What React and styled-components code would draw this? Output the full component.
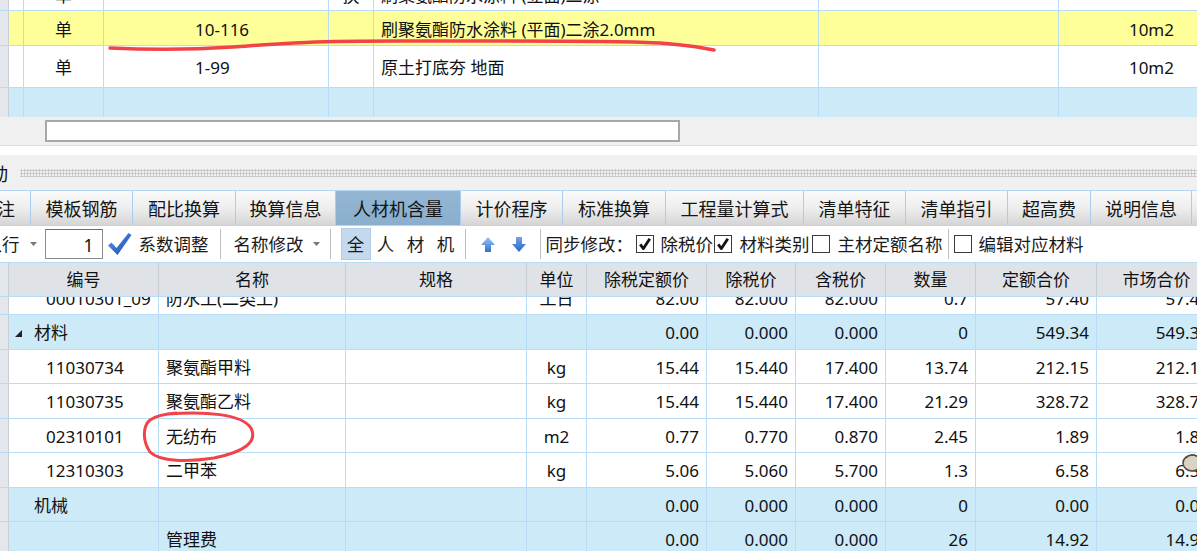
import React from "react";
import styled, { createGlobalStyle } from "styled-components";

const GlobalStyle = createGlobalStyle`
  html, body {
    margin: 0;
    padding: 0;
    background: #f0f0f0;
  }
  body {
    font-family: "Noto Sans", "Noto Sans CJK SC", sans-serif;
  }
`;

const LINE = "#b8dbf6";
const BLUE_ROW = "#cdeaf8";
const TOP_COLS = "9px 15px 80px 225px 45px 445px 240px 160px";
const LOW_COLS = "9px 150px 187px 181px 60px 120px 89px 90px 90px 121px 120px";

const Screen = styled.div`
  position: relative;
  width: 1197px;
  height: 551px;
  overflow: hidden;
  display: flex;
  flex-direction: column;
  background: #f0f0f0;
  color: #111;
`;

const GridPane = styled.div`
  display: flex;
  flex-direction: column;
  overflow: hidden;
  flex: ${p => (p.$fill ? "1" : "none")};
  height: ${p => (p.$h ? `${p.$h}px` : "auto")};
  background: ${p => p.$bg || "#fff"};
`;

const Row = styled.div`
  display: grid;
  grid-template-columns: ${p => p.$cols};
  flex: none;
  height: ${p => p.$h}px;
  margin-top: ${p => (p.$offset ? `-${p.$offset}px` : "0")};
  background: ${p => p.$bg || "#fff"};
  border-bottom: 1px solid ${LINE};
  box-sizing: border-box;
`;

const HeadRow = styled(Row)`
  background: #dfe3e8;
`;

const Cell = styled.div`
  display: flex;
  align-items: center;
  justify-content: ${p =>
    p.$align === "right" ? "flex-end" : p.$align === "left" ? "flex-start" : "center"};
  padding-top: 3px;
  padding-left: ${p => (p.$pl !== undefined ? p.$pl : 7)}px;
  padding-right: ${p => (p.$pr !== undefined ? p.$pr : 7)}px;
  border-right: 1px solid ${LINE};
  box-sizing: border-box;
  min-width: 0;
  overflow: hidden;
  white-space: nowrap;
  font-size: 17px;
  line-height: 20px;
`;

const HeadCell = styled(Cell)`
  padding-top: 1px;
  border-right-color: #c7cdd5;
`;

const GutterCell = styled.div`
  background: #e3e6eb;
  border-right: 1px solid #c9ced6;
`;

const Tri = styled.svg`
  flex: none;
  margin-right: 12px;
`;

const EditBar = styled.div`
  flex: none;
  height: 29px;
  box-sizing: border-box;
  padding: 3px 0 0 45px;
  background: #f0f0f0;
  border-bottom: 1px solid #c8e1f6;
`;

const EditBox = styled.div`
  width: 635px;
  height: 22px;
  box-sizing: border-box;
  background: #fff;
  border: 2px solid #a8a8a8;
`;

const WhiteStrip = styled.div`
  flex: none;
  height: 9px;
  background: #fff;
`;

const GripBar = styled.div`
  flex: none;
  height: 35px;
  display: flex;
  align-items: center;
  background: #f0f0f0;
  font-family: "Noto Sans CJK SC", sans-serif;
  font-size: 18px;
  white-space: nowrap;
`;

const GripLabel = styled.span`
  margin-left: -28px;
  line-height: 20px;
`;

const GripDots = styled.div`
  flex: 1;
  height: 8px;
  margin-left: 12px;
  background-image: radial-gradient(circle, #bdbdbd 0.9px, transparent 1.2px);
  background-size: 3px 3px;
`;

const TabStrip = styled.div`
  flex: none;
  height: 36px;
  box-sizing: border-box;
  display: flex;
  margin-left: -36px;
  border-top: 1px solid #b5d5f2;
  border-bottom: 1px solid #b5d5f2;
  background: #fff;
`;

const Tab = styled.div`
  flex: none;
  width: ${p => p.$w}px;
  box-sizing: border-box;
  display: flex;
  align-items: center;
  justify-content: center;
  border-right: 1px solid #a9cdee;
  background: ${p =>
    p.$active
      ? "linear-gradient(#94b6d3, #8aaecd)"
      : "linear-gradient(#fafafa 0%, #ececec 55%, #d5d5d5 100%)"};
  font-family: "Noto Sans CJK SC", sans-serif;
  font-size: 18px;
  line-height: 20px;
  color: #151515;
  white-space: nowrap;
`;

const Toolbar = styled.div`
  flex: none;
  height: 37px;
  box-sizing: border-box;
  display: flex;
  align-items: center;
  background: #fff;
  border-bottom: 1px solid ${LINE};
  font-family: "Noto Sans CJK SC", sans-serif;
  font-size: 17.5px;
  white-space: nowrap;
`;

const Item = styled.div`
  flex: none;
  display: flex;
  align-items: center;
  margin-left: ${p => p.$ml || 0}px;
  line-height: 20px;
  color: #1a1a1a;
`;

const Sep = styled.div`
  flex: none;
  width: 1px;
  height: 30px;
  margin-left: ${p => p.$ml || 0}px;
  background: #bdbdbd;
`;

const NumBox = styled.div`
  flex: none;
  width: 58px;
  height: 30px;
  margin-left: ${p => p.$ml || 0}px;
  box-sizing: border-box;
  border: 1px solid #8c8c8c;
  border-top-color: #6f6f6f;
  display: flex;
  align-items: flex-end;
  justify-content: flex-end;
  padding: 0 8px 3px 0;
  font-family: "Noto Sans", sans-serif;
  font-size: 17.5px;
  line-height: 20px;
`;

const FilterBtn = styled.div`
  flex: none;
  width: 30px;
  height: 32px;
  box-sizing: border-box;
  display: flex;
  align-items: center;
  justify-content: center;
  background: ${p => (p.$active ? "#c5d9ee" : "transparent")};
  border: 1px solid ${p => (p.$active ? "#b3cce6" : "transparent")};
`;

const Box = styled.div`
  flex: none;
  width: 18px;
  height: 18px;
  margin-left: ${p => p.$ml || 0}px;
  box-sizing: border-box;
  border: 1px solid #3a3a3a;
  background: #fff;
  display: flex;
  align-items: center;
  justify-content: center;
`;

const Overlay = styled.svg`
  position: absolute;
  left: 0;
  top: 0;
  pointer-events: none;
`;

const Caret = ({ ml }) => (
  <Item $ml={ml}>
    <svg width="7" height="4" viewBox="0 0 7 4">
      <path d="M0 0 L7 0 L3.5 4 Z" fill="#777" />
    </svg>
  </Item>
);

const Check = ({ checked, ml }) => (
  <Box $ml={ml}>
    {checked && (
      <svg width="14" height="14" viewBox="0 0 14 14">
        <path d="M2.2 7.4 L5.4 11.6 L11.8 1.8" fill="none" stroke="#111" strokeWidth="2.8" strokeLinejoin="round" />
      </svg>
    )}
  </Box>
);

const Arrow = ({ down, ml }) => (
  <Item $ml={ml}>
    <svg width="14" height="15" viewBox="0 0 14 15">
      <defs>
        <linearGradient id={down ? "ad" : "au"} x1="0" y1="0" x2="0" y2="1">
          <stop offset="0" stopColor={down ? "#6da4ea" : "#9cc8f4"} />
          <stop offset="1" stopColor={down ? "#2a66cc" : "#2f6fd3"} />
        </linearGradient>
      </defs>
      <path
        d={down ? "M4 0 H10 V7 H14 L7 15 L0 7 H4 Z" : "M7 0 L14 8 H10 V15 H4 V8 H0 Z"}
        fill={`url(#${down ? "ad" : "au"})`}
      />
    </svg>
  </Item>
);

const topRows = [
  { h: 33, offset: 22, bg: "#fff", type: "单", code: "", mark: "换", name: "刷聚氨酯防水涂料 (立面)二涂", unit: "" },
  { h: 35, bg: "#ffff99", type: "单", code: "10-116", mark: "", name: "刷聚氨酯防水涂料 (平面)二涂2.0mm", unit: "10m2" },
  { h: 42, bg: "#fff", type: "单", code: "1-99", mark: "", name: "原土打底夯 地面", unit: "10m2" },
  { h: 35, bg: BLUE_ROW, type: "", code: "", mark: "", name: "", unit: "" },
];

const headers = ["编号", "名称", "规格", "单位", "除税定额价", "除税价", "含税价", "数量", "定额合价", "市场合价"];

const lowRows = [
  { offset: 16.5, code: "00010301_09", name: "防水工(二类工)", unit: "工日", v: ["82.00", "82.000", "82.000", "0.7", "57.40", "57.40"] },
  { group: true, tri: true, code: "材料", v: ["0.00", "0.000", "0.000", "0", "549.34", "549.34"] },
  { code: "11030734", name: "聚氨酯甲料", unit: "kg", v: ["15.44", "15.440", "17.400", "13.74", "212.15", "212.15"] },
  { code: "11030735", name: "聚氨酯乙料", unit: "kg", v: ["15.44", "15.440", "17.400", "21.29", "328.72", "328.72"] },
  { code: "02310101", name: "无纺布", unit: "m2", v: ["0.77", "0.770", "0.870", "2.45", "1.89", "1.89"] },
  { code: "12310303", name: "二甲苯", unit: "kg", v: ["5.06", "5.060", "5.700", "1.3", "6.58", "6.58"] },
  { group: true, code: "机械", v: ["0.00", "0.000", "0.000", "0", "0.00", "0.00"] },
  { group: true, code: "", name: "管理费", v: ["0.00", "0.000", "0.000", "26", "14.92", "14.92"] },
];

const tabs = [
  ["备注", 67], ["模板钢筋", 102], ["配比换算", 103], ["换算信息", 100], ["人材机含量", 125],
  ["计价程序", 102], ["标准换算", 103], ["工程量计算式", 138], ["清单特征", 102], ["清单指引", 102],
  ["超高费", 83], ["说明信息", 101], ["工作内容", 100],
];

export default function App() {
  return (
    <>
      <GlobalStyle />
      <Screen>
        <GridPane $h={117} $bg={BLUE_ROW}>
          {topRows.map((r, i) => (
            <Row key={i} $cols={TOP_COLS} $h={r.h} $bg={r.bg} $offset={r.offset}>
              <GutterCell />
              <Cell />
              <Cell>{r.type}</Cell>
              <Cell $align="left" $pl={91}>{r.code}</Cell>
              <Cell>{r.mark}</Cell>
              <Cell $align="left">{r.name}</Cell>
              <Cell />
              <Cell $align="right" $pr={44}>{r.unit}</Cell>
            </Row>
          ))}
        </GridPane>

        <EditBar>
          <EditBox />
        </EditBar>
        <WhiteStrip />
        <GripBar>
          <GripLabel>联动</GripLabel>
          <GripDots />
        </GripBar>

        <TabStrip>
          {tabs.map(([label, w]) => (
            <Tab key={label} $w={w} $active={label === "人材机含量"}>{label}</Tab>
          ))}
        </TabStrip>

        <Toolbar>
          <Item $ml={-33}>插入行</Item>
          <Caret ml={10} />
          <NumBox $ml={8}>1</NumBox>
          <Item $ml={4}>
            <svg width="25" height="24" viewBox="0 0 25 24">
              <defs>
                <linearGradient id="bc" x1="0" y1="0" x2="1" y2="1">
                  <stop offset="0" stopColor="#5b9be9" />
                  <stop offset="1" stopColor="#1746b4" />
                </linearGradient>
              </defs>
              <path d="M1 13.5 L4.5 10.5 L9.5 16 L21.5 1 L24.5 3 L10.5 23 Z" fill="url(#bc)" />
            </svg>
          </Item>
          <Item $ml={7}>系数调整</Item>
          <Sep $ml={11} />
          <Item $ml={13}>名称修改</Item>
          <Caret ml={9} />
          <Sep $ml={10} />
          <Item $ml={10}>
            <FilterBtn $active>全</FilterBtn>
            <FilterBtn>人</FilterBtn>
            <FilterBtn>材</FilterBtn>
            <FilterBtn>机</FilterBtn>
          </Item>
          <Sep $ml={4} />
          <Arrow ml={15} />
          <Arrow down ml={17} />
          <Sep $ml={14} />
          <Item $ml={5}>同步修改：</Item>
          <Check checked ml={2.5} />
          <Item $ml={7}>除税价</Item>
          <Check checked ml={0.5} />
          <Item $ml={8}>材料类别</Item>
          <Check ml={2} />
          <Item $ml={8}>主材定额名称</Item>
          <Sep $ml={5} />
          <Check ml={5} />
          <Item $ml={7}>编辑对应材料</Item>
        </Toolbar>

        <HeadRow $cols={LOW_COLS} $h={34}>
          <GutterCell />
          {headers.map(h => (
            <HeadCell key={h}>{h}</HeadCell>
          ))}
        </HeadRow>

        <GridPane $fill $bg={BLUE_ROW}>
          {lowRows.map((r, i) => (
            <Row key={i} $cols={LOW_COLS} $h={34.5} $offset={r.offset} $bg={r.group ? BLUE_ROW : "#fff"}>
              <GutterCell />
              {r.group ? (
                <Cell $align="left" $pl={r.tri ? 6 : 25}>
                  {r.tri && (
                    <Tri width="7" height="7" viewBox="0 0 7 7">
                      <path d="M0 7 L7 7 L7 0 Z" fill="#222" />
                    </Tri>
                  )}
                  {r.code}
                </Cell>
              ) : (
                <Cell $align="left" $pl={37}>{r.code}</Cell>
              )}
              <Cell $align="left">{r.name || ""}</Cell>
              <Cell />
              <Cell>{r.unit || ""}</Cell>
              {r.v.map((n, j) => (
                <Cell key={j} $align="right">{n}</Cell>
              ))}
            </Row>
          ))}
        </GridPane>

        <Overlay width="1197" height="551" viewBox="0 0 1197 551">
          <path
            d="M110 48 C 150 50, 190 50, 233 47 S 300 41, 400 41 S 620 40, 660 43 S 700 48, 714 50"
            fill="none"
            stroke="#f24448"
            strokeWidth="3.5"
            strokeLinecap="round"
          />
          <path
            d="M168 414 C 205 411, 242 414, 251 428 C 258 442, 244 452, 214 458 C 188 462, 160 462, 150 452 C 142 440, 143 426, 150 420 C 156 416, 162 414, 176 413"
            fill="none"
            stroke="#f24448"
            strokeWidth="3"
            strokeLinecap="round"
          />
          <ellipse cx="1192" cy="463" rx="9" ry="8" fill="#dad3c5" stroke="#5e4c3a" strokeWidth="1.6" />
          <path d="M1186 458 C 1188 455, 1193 454, 1197 456" fill="none" stroke="#5e4c3a" strokeWidth="1.4" />
        </Overlay>
      </Screen>
    </>
  );
}
